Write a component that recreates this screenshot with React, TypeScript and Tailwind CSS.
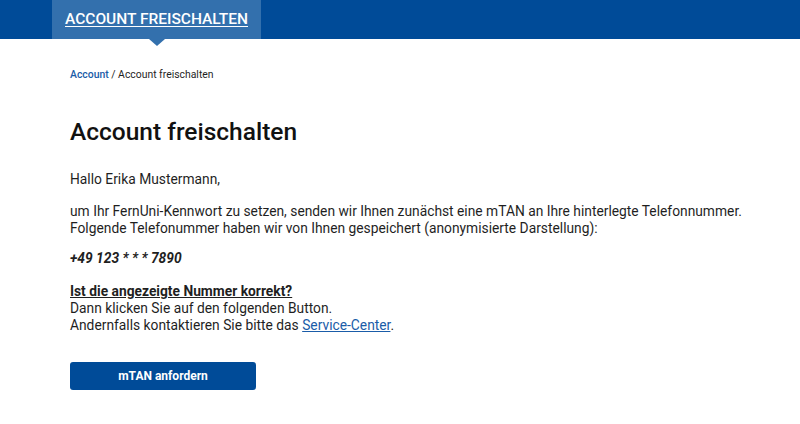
export default function App() {
  return (
    <div className="min-h-screen bg-white font-['Roboto',sans-serif] text-[#1f1f1f]">
      {/* Top bar with active tab */}
      <header className="h-[39px] bg-[#004b98] pl-[52px]">
        <div className="relative flex h-full w-[209px] items-center justify-center bg-[#3370ad]">
          <a href="#" className="text-[15.5px] font-medium uppercase text-white underline underline-offset-2">
            Account freischalten
          </a>
          <span className="absolute left-[97px] top-full h-0 w-0 border-x-[8px] border-t-[7px] border-x-transparent border-t-[#3370ad]" />
        </div>
      </header>

      <main className="pl-[70px] pr-[30px]">
        <nav className="mt-[29px] text-[10.4px] leading-[14px]">
          <a href="#" className="font-medium text-[#1a5ca8]">Account</a>
          <span> / Account freischalten</span>
        </nav>

        <h1 className="mt-[36px] text-[24.5px] leading-[28px] font-medium text-[#111]">Account freischalten</h1>

        <div className="mt-[25px] text-[13.8px] leading-[17px]">
          <p>Hallo Erika Mustermann,</p>

          <p className="mt-[15px]">
            um Ihr FernUni-Kennwort zu setzen, senden wir Ihnen zunächst eine mTAN an Ihre hinterlegte Telefonnummer.
            <br />
            Folgende Telefonummer haben wir von Ihnen gespeichert (anonymisierte Darstellung):
          </p>

          <p className="mt-[13px] font-bold italic">+49 123 * * * 7890</p>

          <p className="mt-[16px]">
            <span className="font-bold underline">Ist die angezeigte Nummer korrekt?</span>
            <br />
            Dann klicken Sie auf den folgenden Button.
            <br />
            Andernfalls kontaktieren Sie bitte das{' '}
            <a href="#" className="text-[#1a5ca8] underline">Service-Center</a>.
          </p>
        </div>

        <button
          type="button"
          className="mt-[28px] h-[28px] w-[186px] rounded-[3px] bg-[#004b98] text-[12px] font-bold text-white"
        >
          mTAN anfordern
        </button>
      </main>
    </div>
  );
}
